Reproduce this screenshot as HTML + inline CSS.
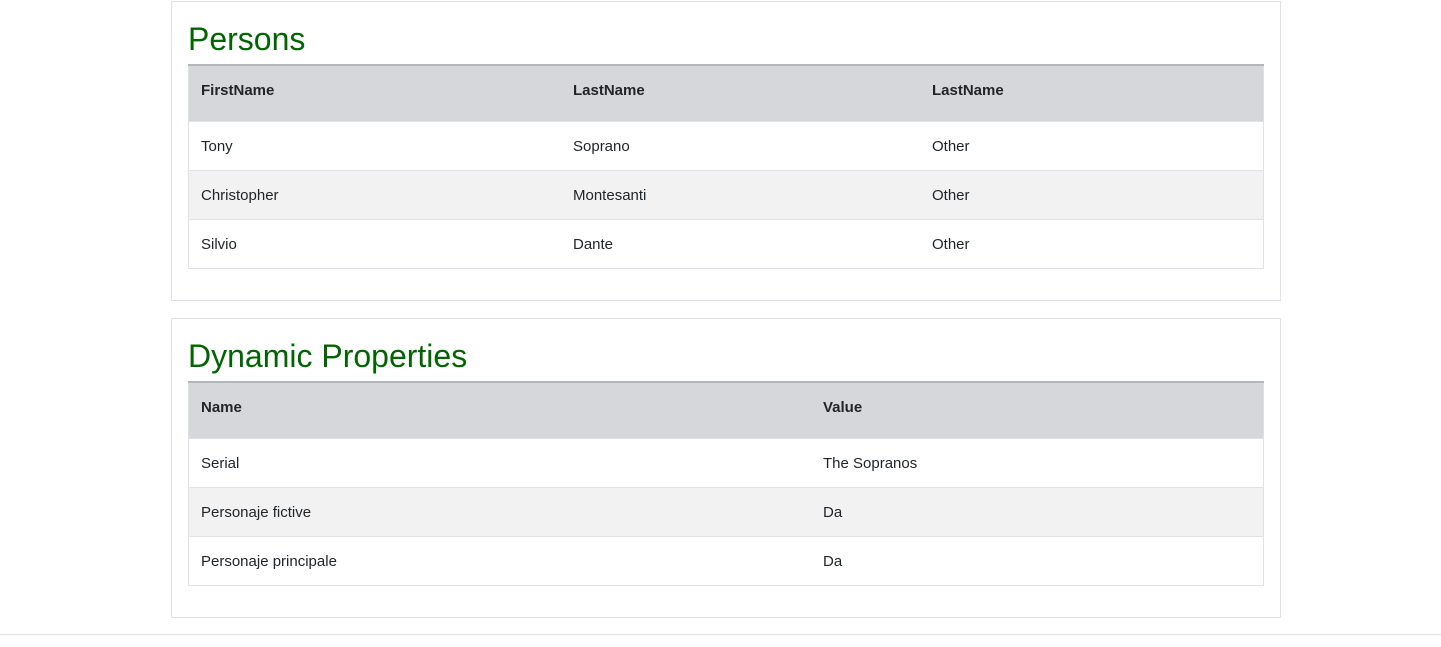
<!DOCTYPE html><html><head><style>
body{margin:0;background:#fff;font-family:"Liberation Sans",sans-serif;font-size:15px;color:#212529}
.card{position:absolute;left:171px;width:1108px;height:298px;border:1px solid #dee2e6;background:#fff}
h2{position:absolute;left:16px;top:-1px;margin:0;font-weight:normal;color:#006400;font-size:32px;line-height:76px}
table{position:absolute;left:16px;top:62px;width:1076px;border-collapse:collapse;border:1px solid #dee2e6;border-top:2px solid #b4b6ba}
th{background:#d6d7db;height:49px;text-align:left;padding:0 12px 6px;font-weight:bold;font-size:15px}
td{height:48px;padding:0 12px;border-top:1px solid #dee2e6}
tr.s td{background:#f2f2f2}
.foot{position:absolute;left:0;top:634px;width:1441px;border-top:1px solid #dee2e6}
</style></head><body>
<div class="card" style="top:1px">
<h2>Persons</h2>
<table><tr><th style="width:348px">FirstName</th><th style="width:335px">LastName</th><th>LastName</th></tr>
<tr><td>Tony</td><td>Soprano</td><td>Other</td></tr>
<tr class="s"><td>Christopher</td><td>Montesanti</td><td>Other</td></tr>
<tr><td>Silvio</td><td>Dante</td><td>Other</td></tr></table>
</div>
<div class="card" style="top:318px">
<h2>Dynamic Properties</h2>
<table><tr><th style="width:598px">Name</th><th>Value</th></tr>
<tr><td>Serial</td><td>The Sopranos</td></tr>
<tr class="s"><td>Personaje fictive</td><td>Da</td></tr>
<tr><td>Personaje principale</td><td>Da</td></tr></table>
</div>
<div class="foot"></div>
</body></html>
